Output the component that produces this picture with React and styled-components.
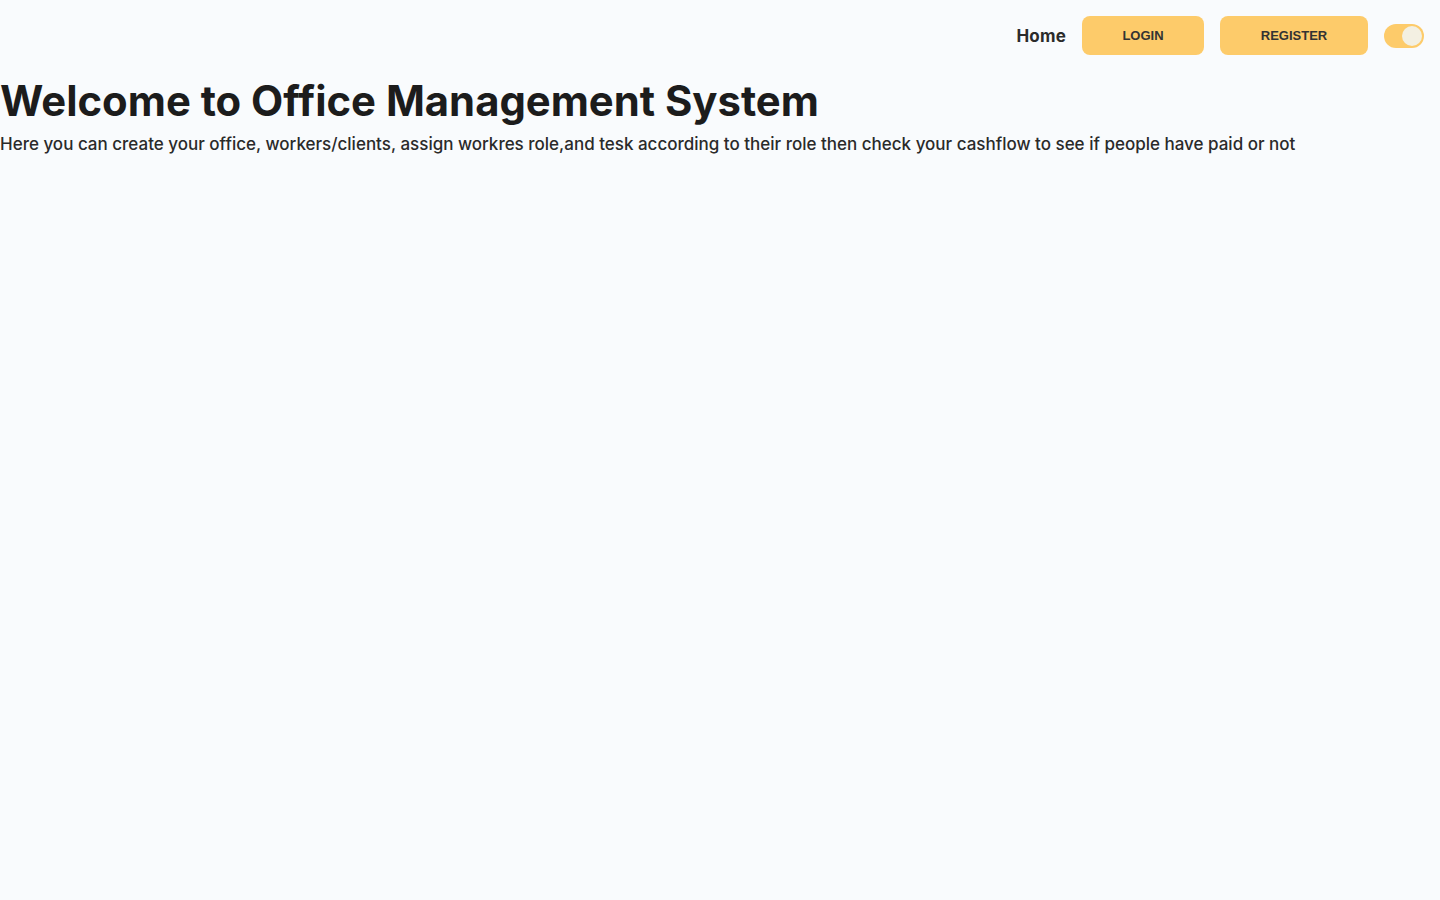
import React from "react";
import styled, { createGlobalStyle } from "styled-components";

const Global = createGlobalStyle`
  html, body { margin: 0; padding: 0; background: #f9fbfd; }
  body { font-family: Inter, "Noto Sans", sans-serif; color: #1f1f1f; }
`;

const Page = styled.div`
  min-height: 100vh;
  background: #f9fbfd;
`;

const Nav = styled.nav`
  display: flex;
  justify-content: flex-end;
  align-items: center;
  gap: 16px;
  padding: 16px 16px 0 16px;
`;

const NavLink = styled.a`
  font-family: Inter, sans-serif;
  font-weight: 700;
  font-size: 17px;
  color: #2b2b2b;
  text-decoration: none;
  letter-spacing: 0.2px;
`;

const Button = styled.button`
  width: ${(p) => p.$w}px;
  height: 39px;
  border: none;
  border-radius: 8px;
  background: #fdcb6a;
  font-family: "Liberation Sans", Arial, sans-serif;
  font-weight: 700;
  font-size: 13px;
  color: #333;
  cursor: pointer;
`;

const Toggle = styled.div`
  width: 40px;
  height: 24px;
  border-radius: 12px;
  background: #fdcb6a;
  display: flex;
  align-items: center;
  justify-content: flex-end;
  padding: 0 2px;
  box-sizing: border-box;
`;

const Knob = styled.span`
  width: 20px;
  height: 20px;
  border-radius: 50%;
  background: #f3f0e2;
`;

const Hero = styled.section`
  padding-top: 20px;
`;

const Title = styled.h1`
  margin: 0;
  font-family: Inter, sans-serif;
  font-weight: 700;
  font-size: 41.8px;
  line-height: 52px;
  color: #1c1c1c;
`;

const Sub = styled.p`
  margin: 5px 0 0;
  font-family: Inter, sans-serif;
  font-weight: 500;
  font-size: 17px;
  line-height: 24px;
  color: #2a2a2a;
`;

export default function App() {
  return (
    <Page>
      <Global />
      <Nav>
        <NavLink href="#">Home</NavLink>
        <Button $w={122}>LOGIN</Button>
        <Button $w={148}>REGISTER</Button>
        <Toggle>
          <Knob />
        </Toggle>
      </Nav>
      <Hero>
        <Title>Welcome to Office Management System</Title>
        <Sub>
          Here you can create your office, workers/clients, assign workres role,and tesk according to their role then check your cashflow to see if people have paid or not
        </Sub>
      </Hero>
    </Page>
  );
}
